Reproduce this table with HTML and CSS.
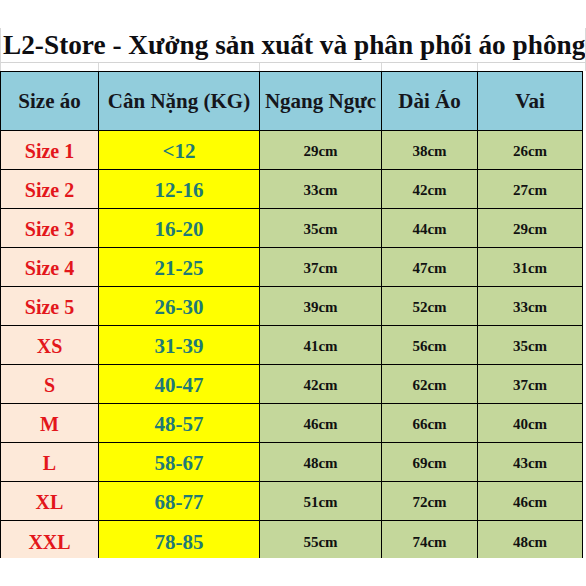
FILE: index.html
```html
<!DOCTYPE html>
<html lang="vi">
<head>
<meta charset="utf-8">
<title>L2-Store - Bảng size</title>
<link rel="stylesheet" href="styles.css">
</head>
<body>
<div class="sheet">
  <div class="title">L2-Store - Xưởng sản xuất và phân phối áo phông</div>
  <div class="gap"><span></span><span></span><span></span><span></span><span></span></div>
  <div class="table">
    <div class="cell head">Size áo</div>
    <div class="cell head">Cân Nặng (KG)</div>
    <div class="cell head">Ngang Ngực</div>
    <div class="cell head">Dài Áo</div>
    <div class="cell head">Vai</div>

    <div class="cell size">Size 1</div><div class="cell kg">&lt;12</div><div class="cell cm">29cm</div><div class="cell cm">38cm</div><div class="cell cm">26cm</div>
    <div class="cell size">Size 2</div><div class="cell kg">12-16</div><div class="cell cm">33cm</div><div class="cell cm">42cm</div><div class="cell cm">27cm</div>
    <div class="cell size">Size 3</div><div class="cell kg">16-20</div><div class="cell cm">35cm</div><div class="cell cm">44cm</div><div class="cell cm">29cm</div>
    <div class="cell size">Size 4</div><div class="cell kg">21-25</div><div class="cell cm">37cm</div><div class="cell cm">47cm</div><div class="cell cm">31cm</div>
    <div class="cell size">Size 5</div><div class="cell kg">26-30</div><div class="cell cm">39cm</div><div class="cell cm">52cm</div><div class="cell cm">33cm</div>
    <div class="cell size">XS</div><div class="cell kg">31-39</div><div class="cell cm">41cm</div><div class="cell cm">56cm</div><div class="cell cm">35cm</div>
    <div class="cell size">S</div><div class="cell kg">40-47</div><div class="cell cm">42cm</div><div class="cell cm">62cm</div><div class="cell cm">37cm</div>
    <div class="cell size">M</div><div class="cell kg">48-57</div><div class="cell cm">46cm</div><div class="cell cm">66cm</div><div class="cell cm">40cm</div>
    <div class="cell size">L</div><div class="cell kg">58-67</div><div class="cell cm">48cm</div><div class="cell cm">69cm</div><div class="cell cm">43cm</div>
    <div class="cell size">XL</div><div class="cell kg">68-77</div><div class="cell cm">51cm</div><div class="cell cm">72cm</div><div class="cell cm">46cm</div>
    <div class="cell size last">XXL</div><div class="cell kg last">78-85</div><div class="cell cm last">55cm</div><div class="cell cm last">74cm</div><div class="cell cm last">48cm</div>
  </div>
</div>
</body>
</html>
```
FILE: styles.css
```css
* { box-sizing: border-box; }
html, body { margin: 0; padding: 0; background: #fff; }
body {
  font-family: "Liberation Serif", "Times New Roman", serif;
  font-weight: bold;
  width: 586px;
  height: 586px;
  overflow: hidden;
}
.sheet { padding-top: 28px; width: 586px; }
.title {
  width: 586px;
  height: 35px;
  padding: 1px 0 0 2px;
  border-left: 1px solid #d9d9d9;
  border-right: 1px solid #d9d9d9;
  border-bottom: 1px solid #d4d4d4;
  font-size: 27.3px;
  line-height: 33px;
  color: #0e0e12;
  white-space: nowrap;
  overflow: hidden;
}
.gap {
  display: grid;
  grid-template-columns: 98px 161px 122px 96px 108px;
  height: 8px;
  border-left: 1px solid #d9d9d9;
  width: 586px;
}
.gap span { border-right: 1px solid #d9d9d9; }
.table {
  display: grid;
  grid-template-columns: 98px 161px 122px 96px 105px;
  grid-template-rows: 59px repeat(10, 39px) 37px;
  width: 583px;
  border-left: 1px solid #000;
  border-top: 1px solid #000;
}
.cell {
  display: flex;
  align-items: center;
  justify-content: center;
  border-right: 1px solid #000;
  border-bottom: 1px solid #000;
  padding-top: 3px;
  white-space: nowrap;
}
.cell.last { border-bottom: none; padding-top: 5px; }
.head {
  background: #92cddc;
  color: #15161c;
  font-size: 21px;
  padding-top: 1px;
}
.size {
  background: #fde9d9;
  color: #e3161b;
  font-size: 20px;
}
.kg {
  background: #ffff00;
  color: #1f7a76;
  font-size: 21px;
}
.cm {
  background: #c4d79b;
  color: #111;
  font-size: 15px;
}
```
